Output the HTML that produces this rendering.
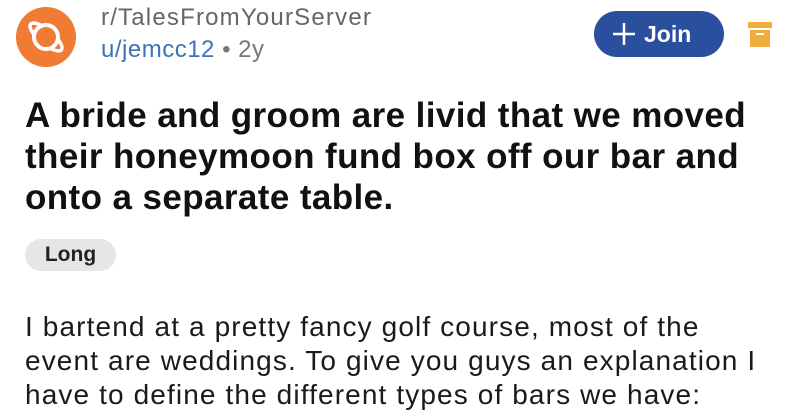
<!DOCTYPE html>
<html><head><style>
body{margin:0;width:800px;height:420px;background:#fff;overflow:hidden;font-family:"Liberation Sans",sans-serif;position:relative}
.a{position:absolute;white-space:nowrap}
</style></head><body>
<svg class="a" style="left:16px;top:7px" width="60" height="60" viewBox="0 0 60 60">
<circle cx="30" cy="30" r="30" fill="#ef7b34"/>
<ellipse cx="30" cy="30" rx="20" ry="7" transform="rotate(40 30 30)" fill="none" stroke="#fff" stroke-width="3.5"/>
<circle cx="30" cy="30" r="12" fill="#ef7b34" stroke="#fff" stroke-width="4"/>
</svg>
<div class="a" style="left:101px;top:4px;font-size:24px;letter-spacing:1.2px;color:#666">r/TalesFromYourServer</div>
<div class="a" style="left:101px;top:36px;font-size:24px;letter-spacing:0.5px;color:#3f72b5">u/jemcc12 <span style="color:#777">• 2y</span></div>
<div class="a" style="left:594px;top:11px;width:130px;height:46px;border-radius:23px;background:#2b4f9f;color:#fff;font-weight:bold;font-size:23px;line-height:46px">
<svg style="position:absolute;left:19px;top:12px" width="22" height="22"><path d="M11 0V22M0 11H22" stroke="#fff" stroke-width="2.5"/></svg>
<span style="position:absolute;left:50px">Join</span></div>
<svg class="a" style="left:748px;top:22px" width="24" height="26"><rect x="0" y="0" width="24" height="6" fill="#f0ad3c"/><rect x="2" y="8" width="20" height="17" fill="#f0ad3c"/><rect x="8" y="11" width="8" height="2" fill="#fff"/></svg>
<div class="a" style="left:25px;top:95px;font-size:35px;font-weight:bold;color:#111;line-height:41px;letter-spacing:0.4px">A bride and groom are livid that we moved<br>their honeymoon fund box off our bar and<br>onto a separate table.</div>
<div class="a" style="left:25px;top:239px;width:91px;height:32px;border-radius:16px;background:#e5e6e8;font-size:21px;font-weight:bold;color:#222;text-align:center;line-height:32px">Long</div>
<div class="a" style="left:25px;top:310px;font-size:28px;color:#1a1a1a;line-height:34px;letter-spacing:1.12px">I bartend at a pretty fancy golf course, most of the<br>event are weddings. To give you guys an explanation I<br>have to define the different types of bars we have:</div>
</body></html>
